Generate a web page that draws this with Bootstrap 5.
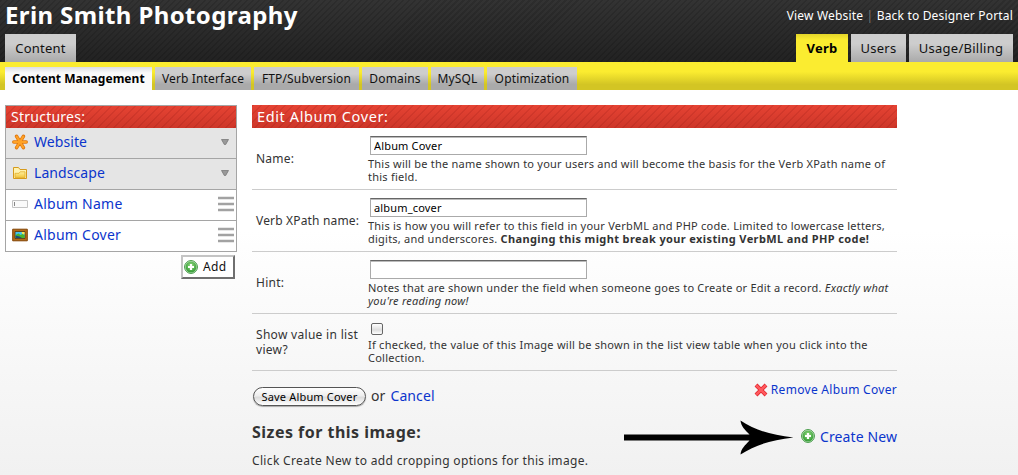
<!DOCTYPE html>
<html lang="en">
<head>
<meta charset="utf-8">
<title>Erin Smith Photography</title>
<link href="https://cdn.jsdelivr.net/npm/bootstrap@5.3.0/dist/css/bootstrap.min.css" rel="stylesheet">
<style>
html{height:100%;overflow:hidden}
body{height:475px;overflow:hidden;font:12px/15px "Noto Sans","Open Sans",sans-serif;letter-spacing:.25px;color:#333;background:linear-gradient(#fff 0,#fff 230px,#f1f1f1 475px)}
a{color:#0b35cc;text-decoration:none}
svg{display:block;flex:none}
.site-head{height:62px;padding-left:5px;background:repeating-linear-gradient(135deg,rgba(0,0,0,.13) 0 1.6px,transparent 1.6px 4.25px),linear-gradient(#333,#222)}
.site-title{font-size:24px;font-weight:700;line-height:29px;letter-spacing:.38px;color:#fff;height:34px}
.top-links{padding-top:8px;padding-right:5px;letter-spacing:.18px}
.top-links a{color:#fff}
.top-links span{color:#777}
.main-tab{height:28px;line-height:28px;font-size:13px;color:#111;text-align:center;background:linear-gradient(#cdcdcd 35%,#aaa)}
.main-tab.active{background:linear-gradient(#e3d52a,#fbec30 6px);font-weight:700;color:#000}
.main-nav{gap:3px;padding-right:5px}
.sub-bar{height:28px;padding:5px 5px 0;gap:3px;background:linear-gradient(#fbec30 35%,#d3c524 80%)}
.sub-bar a{height:23px;line-height:23px;color:#111;text-align:center;white-space:nowrap;letter-spacing:.15px;background:linear-gradient(#cdcdcd 30%,#aaa 75%)}
.sub-bar a.active{font-weight:700;color:#000;letter-spacing:.04px;background:linear-gradient(#dcdde4,#fafafa 6px)}
.w52{width:52px}.w53{width:53px}.w55{width:55px}.w66{width:66px}.w71{width:71px}.w90{width:90px}.w96{width:96px}.w104{width:104px}.w105{width:105px}.w147{width:147px}
.red-bar{height:22px;line-height:22px;font-size:14px;color:#fff;padding-left:5px;background:repeating-linear-gradient(135deg,rgba(100,0,0,.11) 0 1.6px,transparent 1.6px 5.66px),linear-gradient(#e64333,#cd3629)}
.page-row{gap:15px;padding:15px 5px 0}
.side-col{width:232px}
.structures{border:1px solid #a5a5a5}
.structures .item{height:31px;border-bottom:1px solid #a5a5a5;padding:0 2px 2px 6px;background:#fff;font-size:14px}
.structures .item:last-child{border:0;height:30px}
.structures .item.group{background:#e5e5e5;padding-right:7px}
.structures a{margin-left:6px;margin-top:-2px;letter-spacing:.25px}
.structures .group a{letter-spacing:.08px}
.add-btn{width:54px;height:24px;margin:3px 2px 0 0;padding:0 0 1px 1px;gap:5px;border:2px solid;border-color:#c4c4c4 #6f6f6f #6f6f6f #c4c4c4;background:#fff;color:#111;font-size:12px;letter-spacing:.3px}
.edit-col{width:645px}
.edit-col .red-bar{font-size:14.5px;letter-spacing:.62px;height:23px}
.field-row{height:62px;border-bottom:1px solid #ccc;white-space:nowrap}
.field-row.short{height:57px}
.field-label{width:116px;padding-left:4px}
.field-row.short .field-label{letter-spacing:.3px}
.field-name{letter-spacing:.17px}
.field-body{font-size:11px;line-height:13px;padding-top:8px;letter-spacing:.23px}
.field-row.short .field-body{letter-spacing:.25px}
.text-box{display:block;width:217px;height:19px;margin-left:2px;margin-bottom:2px;padding:0 4px 0 3px;border:1px solid #aaa;border-top-color:#666;border-radius:0;box-shadow:inset 0 1px #bbb;background:#fff;color:#000;font:11px/17px "Noto Sans",sans-serif;letter-spacing:.17px;outline:0}
.tick-box{appearance:none;display:block;width:12px;height:12px;margin:1px 0 3px 3px;border:1px solid #666;border-radius:2px;background:linear-gradient(#fff,#ddd 60%,#fff)}
.warn{letter-spacing:.38px}
.action-row{margin-top:16px}
.action-row span{margin:-3px 5px 0 5px}
.action-row a{margin-top:-3px}
.save-btn{width:113px;height:19px;margin-left:1px;border:1.5px solid #555;border-radius:10px;background:linear-gradient(#fff,#eee 45%,#dcdcdc 55%,#fff);font-size:11px;line-height:16px;color:#000;padding:0;letter-spacing:.17px;box-shadow:0 1px 1px #aaa}
.big-text{font-size:14px;letter-spacing:.1px}
.sizes-title{font-size:16px;line-height:20px;letter-spacing:.48px;font-weight:700;margin:16px 0 11px}
.sizes-note{letter-spacing:.34px}
.remove-link{margin-top:11px;gap:3px;letter-spacing:.3px}
.create-row{margin-top:22px;gap:7px}
.create-row a{gap:5px;margin-top:-2px}
</style>
</head>
<body>
<svg width="0" height="0" class="position-absolute"><defs>
<radialGradient id="green" cx=".5" cy=".35" r=".65"><stop offset="0" stop-color="#8ed67d"/><stop offset="1" stop-color="#329b34"/></radialGradient>
<linearGradient id="gold" x2="0" y2="1"><stop stop-color="#fff0a0"/><stop offset="1" stop-color="#f2c53a"/></linearGradient>
<symbol id="plus" viewBox="0 0 14 14"><circle cx="7" cy="7" r="6.4" fill="#d9f0d5" stroke="#38943b"/><circle cx="7" cy="7" r="5.5" fill="url(#green)"/><path d="M7 4v6M4 7h6" stroke="#fff" stroke-width="2.2"/></symbol>
<symbol id="grip" viewBox="0 0 16 16"><path d="M0 2h16M0 8h16M0 14h16" stroke="#a2a2a2" stroke-width="2.4"/></symbol>
<symbol id="caret" viewBox="0 0 8 6"><path d="M.5.5h7L4.7 5.5H3.3z" fill="#999" stroke="#707070" stroke-width=".7"/></symbol>
</defs></svg>

<header class="site-head d-flex justify-content-between">
  <div>
    <div class="site-title">Erin Smith Photography</div>
    <a class="main-tab d-block w71" href="#">Content</a>
  </div>
  <div class="d-flex flex-column justify-content-between align-items-end">
    <div class="top-links text-nowrap"><a href="#">View Website</a> <span>|</span> <a href="#">Back to Designer Portal</a></div>
    <nav class="main-nav d-flex">
      <a class="main-tab active w52" href="#">Verb</a>
      <a class="main-tab w55" href="#">Users</a>
      <a class="main-tab w104" href="#">Usage/Billing</a>
    </nav>
  </div>
</header>
<nav class="sub-bar d-flex">
  <a class="active w147" href="#">Content Management</a>
  <a class="w96" href="#">Verb Interface</a>
  <a class="w105" href="#">FTP/Subversion</a>
  <a class="w66" href="#">Domains</a>
  <a class="w53" href="#">MySQL</a>
  <a class="w90" href="#">Optimization</a>
</nav>

<main class="page-row d-flex">
  <aside class="side-col">
    <div class="structures">
      <div class="red-bar">Structures:</div>
      <div class="item group d-flex align-items-center">
        <svg width="16" height="16" viewBox="0 0 16 16"><path d="M1.800 8h12.400M4.600 2.300l6.800 11.400M11.400 2.300L4.600 13.700" stroke="#e07810" stroke-width="3.500" stroke-linecap="round"/><path d="M2 8h12M4.700 2.600l6.600 10.800M11.300 2.600L4.700 13.400" stroke="#ffa226" stroke-width="2" stroke-linecap="round"/></svg>
        <a class="me-auto" href="#">Website</a><svg width="8" height="6"><use href="#caret"/></svg>
      </div>
      <div class="item group d-flex align-items-center">
        <svg width="16" height="16" viewBox="0 0 16 16"><path d="M1.500 13.500v-11h5l1.500 2h6.500v9z" fill="#fff3b0" stroke="#d69a1c"/><path d="M3 12.500V8.300h4l1.200-1.500H13v5.700z" fill="url(#gold)" stroke="#e2ad2c" stroke-width=".8"/></svg>
        <a class="me-auto" href="#">Landscape</a><svg width="8" height="6"><use href="#caret"/></svg>
      </div>
      <div class="item d-flex align-items-center">
        <svg width="16" height="16" viewBox="0 0 16 16"><path d="M.5 4.500h15v7H.5z" fill="#fafafa" stroke="#c4c4c4"/><path d="M2.500 6v4" stroke="#888"/></svg>
        <a class="me-auto" href="#">Album Name</a><svg width="16" height="16"><use href="#grip"/></svg>
      </div>
      <div class="item d-flex align-items-center">
        <svg width="16" height="16" viewBox="0 0 16 16"><path d="M.7 2.200h14.600v11.600H.7z" fill="#b36b16" stroke="#824507"/><path d="M3 4.500h10v7H3z" fill="#43c3ef" stroke="#5c3405" stroke-width=".8"/><path d="M3.500 8l3-1.500 2 1.500 2-1 2 1v3h-9z" fill="#48b62b"/><path d="M3.500 8.500l4 1 2.500 1.500H3.500z" fill="#1b4e7a"/><path d="M9.500 5h3v2.500L10.500 7z" fill="#ffe54a"/></svg>
        <a class="me-auto" href="#">Album Cover</a><svg width="16" height="16"><use href="#grip"/></svg>
      </div>
    </div>
    <button class="add-btn d-flex align-items-center ms-auto"><svg width="14" height="14"><use href="#plus"/></svg>Add</button>
  </aside>

  <section class="edit-col">
    <div class="red-bar">Edit Album Cover:</div>
    <div class="field-row d-flex">
      <label class="field-label align-self-center">Name:</label>
      <div class="field-body"><input class="text-box" value="Album Cover">This will be the name shown to your users and will become the basis for the Verb XPath name of<br>this field.</div>
    </div>
    <div class="field-row d-flex">
      <label class="field-label field-name align-self-center">Verb XPath name:</label>
      <div class="field-body"><input class="text-box" value="album_cover">This is how you will refer to this field in your VerbML and PHP code. Limited to lowercase letters,<br>digits, and underscores. <b class="warn">Changing this might break your existing VerbML and PHP code!</b></div>
    </div>
    <div class="field-row d-flex">
      <label class="field-label align-self-center">Hint:</label>
      <div class="field-body"><input class="text-box" value="">Notes that are shown under the field when someone goes to Create or Edit a record. <i>Exactly what<br>you're reading now!</i></div>
    </div>
    <div class="field-row short d-flex">
      <label class="field-label align-self-center">Show value in list<br>view?</label>
      <div class="field-body"><input type="checkbox" class="tick-box">If checked, the value of this Image will be shown in the list view table when you click into the<br>Collection.</div>
    </div>
    <div class="d-flex justify-content-between">
      <div>
        <div class="action-row d-flex align-items-center big-text"><button class="save-btn">Save Album Cover</button><span>or</span><a href="#">Cancel</a></div>
        <h2 class="sizes-title">Sizes for this image:</h2>
        <p class="sizes-note mb-0">Click Create New to add cropping options for this image.</p>
      </div>
      <div class="d-flex flex-column align-items-end">
        <a href="#" class="remove-link d-flex align-items-center"><svg width="14" height="14" viewBox="0 0 14 14"><path d="M2 2l10 10M12 2L2 12" stroke="#e0232c" stroke-width="4"/><path d="M2.300 2.300l9.400 9.400M11.700 2.300l-9.400 9.400" stroke="#ff5a5e" stroke-width="2.600"/></svg>Remove Album Cover</a>
        <div class="create-row d-flex align-items-center">
          <svg width="170" height="36" viewBox="0 0 170 36"><path d="M0 15.500h125.500C121 11 117 7 116.500 1.500c15 10 30 14 53 17-23 3-38 7-53 17 .5-6 4.500-9 9-14H0z" fill="#000"/></svg>
          <a href="#" class="d-flex align-items-center big-text"><svg width="14" height="14"><use href="#plus"/></svg>Create New</a>
        </div>
      </div>
    </div>
  </section>
</main>
<script src="https://cdn.jsdelivr.net/npm/bootstrap@5.3.0/dist/js/bootstrap.bundle.min.js"></script>
</body>
</html>
